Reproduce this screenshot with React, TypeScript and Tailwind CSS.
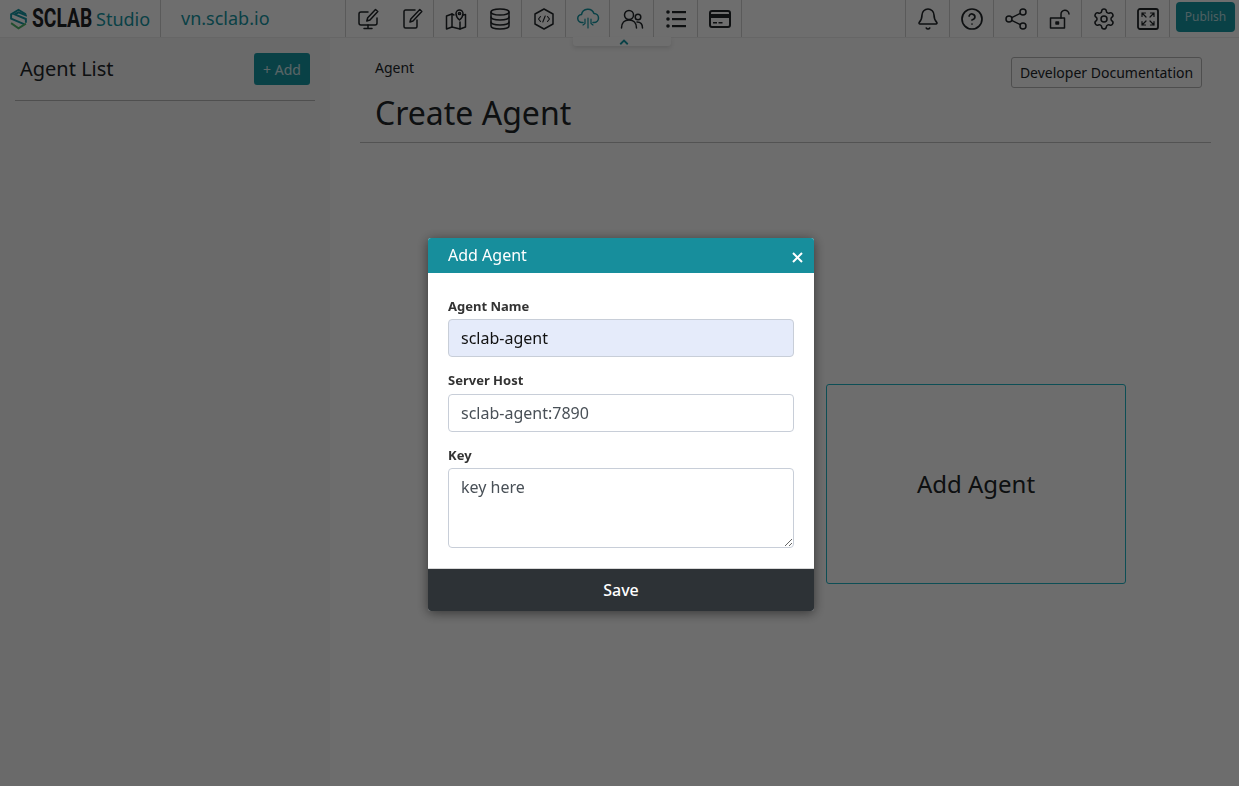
import { Bell, CircleHelp, Settings } from "lucide-react";
import type { ReactNode } from "react";

const font = { fontFamily: '"Noto Sans", sans-serif' };

function Ico({ children, className = "" }: { children: ReactNode; className?: string }) {
  return (
    <svg
      viewBox="0 0 24 24"
      fill="none"
      stroke="currentColor"
      strokeWidth="1.5"
      strokeLinecap="round"
      strokeLinejoin="round"
      className={"h-[24px] w-[24px] " + className}
    >
      {children}
    </svg>
  );
}

function Cell({ children, border = true }: { children: ReactNode; border?: boolean }) {
  return (
    <div className={`flex h-full w-[44px] shrink-0 items-center justify-center border-[#d0d0d0] ${border ? "border-r" : ""}`}>
      {children}
    </div>
  );
}

function Logo() {
  return (
    <svg viewBox="0 0 20 26" className="h-[24px] w-[19px]" fill="none" strokeWidth="2.1">
      <path d="M18 8 10 3 2 8v4.500l14 6" stroke="#1696a3" />
      <path d="M18 8v1l-8-3.200L6 8l12 5v4" stroke="#1696a3" />
      <path d="M2 17.500l8 5.500 8-5" stroke="#4fb56c" />
    </svg>
  );
}

function Header() {
  return (
    <header className="relative flex h-[38px] items-center border-b border-[#ececec] bg-white">
      <div className="flex h-full w-[161px] shrink-0 items-center border-r border-[#d0d0d0] pl-[9px]">
        <Logo />
        <span
          className="ml-[4px] inline-block w-[60px] origin-left scale-x-[0.74] text-[26px] font-bold whitespace-nowrap text-[#1f2326]"
          style={{ fontFamily: '"Roboto", sans-serif' }}
        >
          SCLAB
        </span>
        <span className="mt-[2px] ml-[4px] text-[18px] text-[#1696a3]">Studio</span>
      </div>
      <div className="flex h-full w-[185px] shrink-0 items-center border-r border-[#d0d0d0] pl-[20px] text-[18px] text-[#1696a3]">
        vn.sclab.io
      </div>

      <Cell border={false}>
        <Ico>
          <path d="M12 5H5a2 2 0 0 0-2 2v9a2 2 0 0 0 2 2h14a2 2 0 0 0 2-2v-5" />
          <path d="M8 21.500h8M12 18v3.500" />
          <path d="M19.500 2.500l2.300 2L14 13l-3.200 1 .9-3.300z" />
        </Ico>
      </Cell>
      <Cell>
        <Ico>
          <path d="M15 3H5.500A1.500 1.500 0 0 0 4 4.500v15A1.500 1.500 0 0 0 5.500 21h10a1.500 1.500 0 0 0 1.500-1.500V13" />
          <path d="M19.800 2.500l2 2L13 14l-3 1 .8-3z" />
        </Ico>
      </Cell>
      <Cell>
        <Ico>
          <path d="M10 8 8 7 2.500 9v13L8 20l8 2 5.500-2V7.500L19 8" />
          <path d="M8 7v13M16 15v7" />
          <path d="M15.500 13s-3.500-3-3.500-6.500a3.500 3.500 0 0 1 7 0c0 3.500-3.500 6.500-3.500 6.500z" />
          <circle cx="15.500" cy="6.500" r="1.100" />
        </Ico>
      </Cell>
      <Cell>
        <Ico>
          <ellipse cx="12" cy="5" rx="9" ry="3" />
          <path d="M3 5v14c0 1.700 4 3 9 3s9-1.300 9-3V5" />
          <path d="M3 10c0 1.700 4 3 9 3s9-1.300 9-3M3 15c0 1.700 4 3 9 3s9-1.300 9-3" />
        </Ico>
      </Cell>
      <Cell>
        <Ico>
          <path d="M12 2l9 5v10l-9 5-9-5V7z" />
          <path d="M8.500 9.500 6.500 12l2 2.500M15.500 9.500l2 2.500-2 2.500M13.200 9l-2.400 6" strokeWidth="1.100" />
        </Ico>
      </Cell>
      <Cell>
        <Ico className="text-[#1696a3]">
          <path d="M7 15.500H6a4 4 0 0 1-.5-8A6.500 6.500 0 0 1 18 6.500a4.500 4.500 0 0 1 0 9h-1" />
          <path d="M12 11v10M9 12v4.500l-2 1.500M15 12v4.500l2 1.500" strokeWidth="1.200" />
        </Ico>
      </Cell>
      <Cell>
        <Ico>
          <circle cx="9" cy="8" r="4.500" />
          <path d="M1.500 21c0-5 3-8 7.500-8s7.500 3 7.500 8" />
          <circle cx="18" cy="10" r="2.800" />
          <path d="M17 15c3.500 0 5.500 2.500 5.500 6" />
        </Ico>
      </Cell>
      <Cell>
        <svg viewBox="0 0 24 24" className="h-[24px] w-[24px]" fill="currentColor">
          <circle cx="4" cy="5" r="1.800" />
          <circle cx="4" cy="12" r="1.800" />
          <circle cx="4" cy="19" r="1.800" />
          <rect x="8" y="4" width="14" height="2.200" />
          <rect x="8" y="11" width="14" height="2.200" />
          <rect x="8" y="18" width="14" height="2.200" />
        </svg>
      </Cell>
      <Cell>
        <svg viewBox="0 0 24 24" className="h-[24px] w-[24px]">
          <rect x="2" y="4" width="20" height="16" rx="2" fill="none" stroke="currentColor" strokeWidth="2" />
          <rect x="2" y="7" width="20" height="4" fill="currentColor" />
          <rect x="5" y="15" width="4" height="1.500" fill="currentColor" />
          <rect x="10.500" y="15" width="4" height="1.500" fill="currentColor" />
        </svg>
      </Cell>

      <div className="flex-1" />

      <div className="h-full w-px border-r border-[#d0d0d0]" />
      <Cell>
        <Bell size={24} strokeWidth={1.6} />
      </Cell>
      <Cell>
        <CircleHelp size={24} strokeWidth={1.7} />
      </Cell>
      <Cell>
        <Ico>
          <circle cx="19" cy="5" r="3" />
          <circle cx="5" cy="12" r="3" />
          <circle cx="19" cy="19" r="3" />
          <path d="M7.700 10.600 16.300 6.400M7.700 13.400l8.600 4.200" />
        </Ico>
      </Cell>
      <Cell>
        <Ico>
          <rect x="2.500" y="11" width="14" height="10" />
          <path d="M13 11V7.500a4 4 0 0 1 8-.5" />
          <rect x="8" y="15" width="2.500" height="2" fill="currentColor" />
        </Ico>
      </Cell>
      <Cell>
        <Settings size={24} strokeWidth={1.5} />
      </Cell>
      <Cell>
        <Ico>
          <rect x="2" y="2" width="20" height="20" rx="2" strokeWidth="1.800" />
          <path d="M6 6l4 4M6 6v3.500M6 6h3.500M18 6l-4 4M18 6v3.500M18 6h-3.500M6 18l4-4M6 18v-3.500M6 18h3.500M18 18l-4-4M18 18v-3.500M18 18h-3.500" strokeWidth="1.200" />
        </Ico>
      </Cell>
      <div className="flex w-[69px] shrink-0 items-center justify-center">
        <button className="mb-[3px] ml-[2px] h-[30px] w-[59px] rounded-[4px] bg-[#1696a3] text-[12px] text-white/70">Publish</button>
      </div>

      {/* little tab under the menu that collapses it */}
      <div className="absolute top-[37px] left-[573px] flex h-[9px] w-[98px] items-center justify-center rounded-b-[3px] bg-white shadow-[0_2px_4px_rgba(0,0,0,0.12)]">
        <svg viewBox="0 0 12 8" className="ml-[3px] h-[6px] w-[10px]" fill="none" stroke="#1696a3" strokeWidth="2.400">
          <path d="M1 7l5-5 5 5" />
        </svg>
      </div>
    </header>
  );
}

function Sidebar() {
  return (
    <aside className="w-[330px] shrink-0 bg-[#f6f6f6] px-[15px]">
      <div className="flex h-[63px] items-center justify-between border-b border-[#b8b8b8] pr-[5px] pl-[5px]">
        <h2 className="text-[20px] text-[#212529]">Agent List</h2>
        <button className="h-[32px] w-[56px] rounded-[3px] bg-[#1696a3] text-[14px] text-white/80">+ Add</button>
      </div>
    </aside>
  );
}

function Main() {
  return (
    <main className="flex-1 bg-[#fcfcfc] pt-[19px] pr-[28px] pl-[30px]">
      <div className="flex h-[86px] items-start justify-between border-b border-[#c0c0c0] pr-[9px] pl-[15px]">
        <div>
          <div className="mt-[1px] text-[14px] leading-[20px] text-[#212529]">Agent</div>
          <h1 className="mt-[13px] text-[32px] leading-[44px] text-[#212529]">Create Agent</h1>
        </div>
        <button className="h-[31px] w-[191px] rounded-[3px] border border-[#b5b5b5] text-[14px] text-[#212529]">
          Developer Documentation
        </button>
      </div>
      <div className="mt-[241px] flex justify-end pr-[85px]">
        <div className="flex h-[200px] w-[300px] items-center justify-center rounded-[3px] border border-[#1fb5c6] text-[24px] text-[#212529]">
          Add Agent
        </div>
      </div>
    </main>
  );
}

function Field({ label, children, labelGap = "mb-[4px]" }: { label: string; children: ReactNode; labelGap?: string }) {
  return (
    <div className="mb-[14px] last:mb-0">
      <label className={`block text-[13px] leading-[18px] font-bold text-[#333] ${labelGap}`}>{label}</label>
      {children}
    </div>
  );
}

function Modal() {
  return (
    <div className="fixed inset-0 flex justify-center bg-black/[0.57] pt-[238px]">
      <div className="ml-[3px] h-[373px] w-[386px] overflow-hidden rounded-[3px] bg-white shadow-[0_2px_12px_rgba(0,0,0,0.5)]">
        <div className="flex h-[35px] items-center justify-between bg-[#178e9c] pr-[11px] pl-[20px] text-white">
          <span className="mb-[2px] text-[16px]">Add Agent</span>
          <svg viewBox="0 0 11 11" className="mt-[3px] h-[11px] w-[11px]" stroke="white" strokeWidth="2">
            <path d="M1 1l9 9M10 1l-9 9" />
          </svg>
        </div>
        <div className="h-[296px] border-b border-[#d8d8d8] px-[20px] pt-[24px]">
          <Field label="Agent Name">
            <input
              defaultValue="sclab-agent"
              className="h-[38px] w-full rounded-[4px] border border-[#c8ced8] bg-[#e5ebfa] px-[12px] text-[16px] text-[#111] outline-none"
            />
          </Field>
          <Field label="Server Host" labelGap="mb-[5px]">
            <input
              defaultValue="sclab-agent:7890"
              className="h-[38px] w-full rounded-[4px] border border-[#c8ced8] px-[12px] text-[16px] text-[#495057] outline-none"
            />
          </Field>
          <Field label="Key">
            <textarea
              defaultValue="key here"
              className="block h-[80px] w-full rounded-[4px] border border-[#c8ced8] px-[12px] py-[6px] text-[16px] leading-[24px] text-[#495057] outline-none"
            />
          </Field>
        </div>
        <button className="h-[42px] w-full bg-[#2d3236] text-[16px] font-medium text-white">Save</button>
      </div>
    </div>
  );
}

export default function App() {
  return (
    <div className="flex h-[786px] w-[1239px] flex-col overflow-hidden text-[#212529]" style={font}>
      <Header />
      <div className="flex flex-1">
        <Sidebar />
        <Main />
      </div>
      <Modal />
    </div>
  );
}
